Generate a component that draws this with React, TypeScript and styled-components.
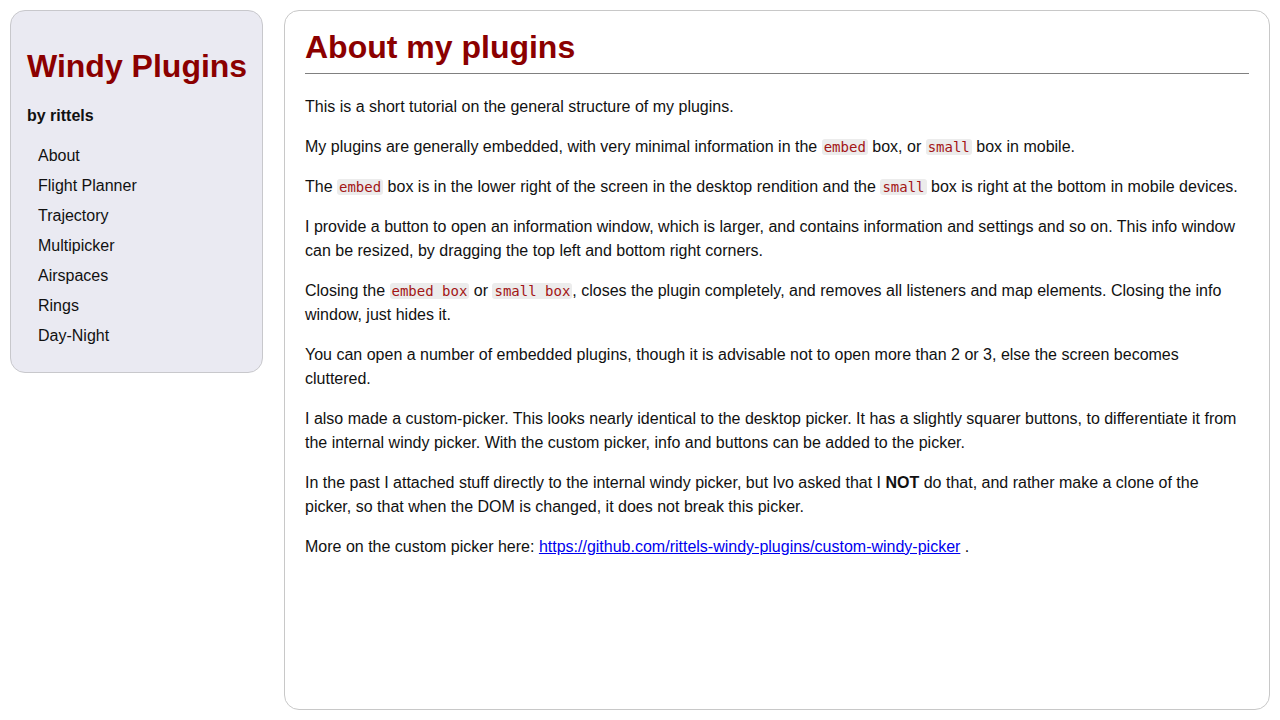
import React from "react";
import styled, { createGlobalStyle } from "styled-components";

const GlobalStyle = createGlobalStyle`
  html, body {
    margin: 0;
    padding: 0;
    background: #ffffff;
  }
  body {
    font-family: "Liberation Sans", Arial, sans-serif;
    font-size: 16px;
    color: #111;
  }
`;

const navItems = [
  "About",
  "Flight Planner",
  "Trajectory",
  "Multipicker",
  "Airspaces",
  "Rings",
  "Day-Night",
];

const App: React.FC = () => {
  return (
    <>
      <GlobalStyle />
      <Page>
        <Sidebar>
          <SiteTitle>Windy Plugins</SiteTitle>
          <Byline>by rittels</Byline>
          <NavList>
            {navItems.map((item) => (
              <NavItem key={item}>{item}</NavItem>
            ))}
          </NavList>
        </Sidebar>
        <Main>
          <Heading>About my plugins</Heading>
          <Para>This is a short tutorial on the general structure of my plugins.</Para>
          <Para>
            My plugins are generally embedded, with very minimal information in the <Code>embed</Code> box, or{" "}
            <Code>small</Code> box in mobile.
          </Para>
          <Para>
            The <Code>embed</Code> box is in the lower right of the screen in the desktop rendition and the{" "}
            <Code>small</Code> box is right at the bottom in mobile devices.
          </Para>
          <Para>
            I provide a button to open an information window, which is larger, and contains information and settings
            and so on. This info window can be resized, by dragging the top left and bottom right corners.
          </Para>
          <Para>
            Closing the <Code>embed box</Code> or <Code>small box</Code>, closes the plugin completely, and removes all
            listeners and map elements. Closing the info window, just hides it.
          </Para>
          <Para>
            You can open a number of embedded plugins, though it is advisable not to open more than 2 or 3, else the
            screen becomes cluttered.
          </Para>
          <Para>
            I also made a custom-picker. This looks nearly identical to the desktop picker. It has a slightly squarer
            buttons, to differentiate it from the internal windy picker. With the custom picker, info and buttons can be
            added to the picker.
          </Para>
          <Para>
            In the past I attached stuff directly to the internal windy picker, but Ivo asked that I <b>NOT</b> do that,
            and rather make a clone of the picker, so that when the DOM is changed, it does not break this picker.
          </Para>
          <Para>
            More on the custom picker here:{" "}
            <Link href="#">https://github.com/rittels-windy-plugins/custom-windy-picker</Link> .
          </Para>
        </Main>
      </Page>
    </>
  );
};

const Page = styled.div`
  display: flex;
  align-items: flex-start;
  gap: 21px;
  padding: 10px;
  box-sizing: border-box;
  height: 720px;
`;

const Sidebar = styled.aside`
  flex: 0 0 253px;
  box-sizing: border-box;
  background: #eaeaf2;
  border: 1px solid #c8c8cc;
  border-radius: 15px;
  padding: 15px 8px 21px 16px;
`;

const SiteTitle = styled.h2`
  margin: 22px 0 20px 0;
  font-size: 32px;
  font-weight: bold;
  color: #8b0000;
  line-height: 36px;
  white-space: nowrap;
`;

const Byline = styled.p`
  margin: 0 0 13px 0;
  font-weight: bold;
  line-height: 24px;
`;

const NavList = styled.ul`
  list-style: none;
  margin: 0;
  padding: 0 0 0 11px;
`;

const NavItem = styled.li`
  line-height: 30px;
  color: #111;
`;

const Main = styled.main`
  flex: 1;
  box-sizing: border-box;
  height: 700px;
  border: 1px solid #c8c8c8;
  border-radius: 15px;
  padding: 18px 20px 20px 20px;
`;

const Heading = styled.h1`
  margin: 0 0 21px 0;
  font-size: 32px;
  line-height: 36px;
  color: #8b0000;
  padding-bottom: 8px;
  border-bottom: 1px solid #808080;
`;

const Para = styled.p`
  margin: 16px 0;
  line-height: 24px;
`;

const Code = styled.code`
  font-family: "DejaVu Sans Mono", "Liberation Mono", monospace;
  font-size: 14px;
  line-height: 1;
  color: #a31515;
  background: #ececec;
  border-radius: 3px;
  padding: 0 2px;
`;

const Link = styled.a`
  color: #0000ee;
  text-decoration: underline;
`;

export default App;
